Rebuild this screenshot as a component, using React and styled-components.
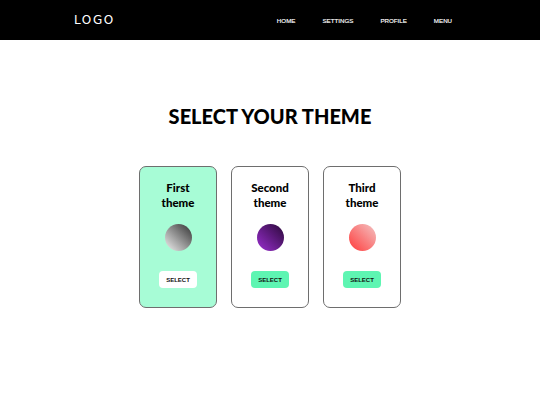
import React from 'react';
import styled, { createGlobalStyle } from 'styled-components';

const Global = createGlobalStyle`
  body {
    margin: 0;
    font-family: "Lato", "Noto Sans", sans-serif;
    background: #fff;
  }
`;

const themes = [
  { name: 'First', swatch: 'linear-gradient(45deg, #f2f2f2 0%, #303030 100%)', active: true },
  { name: 'Second', swatch: 'linear-gradient(45deg, #9a2fd0 0%, #2a0838 100%)' },
  { name: 'Third', swatch: 'linear-gradient(45deg, #ff3a3a 0%, #f3c4c4 100%)' },
];

function App() {
  return (
    <>
      <Global />
      <Header>
        <Logo>LOGO</Logo>
        <Nav>
          <li>HOME</li>
          <li>SETTINGS</li>
          <li>PROFILE</li>
          <li>MENU</li>
        </Nav>
      </Header>
      <Main>
        <Title>SELECT YOUR THEME</Title>
        <Cards>
          {themes.map((t) => (
            <Card key={t.name} active={t.active}>
              <CardTitle>{t.name}<br />theme</CardTitle>
              <Swatch style={{ background: t.swatch }} />
              <SelectButton active={t.active}>SELECT</SelectButton>
            </Card>
          ))}
        </Cards>
      </Main>
    </>
  );
}

export default App;

const Header = styled.header`
  height: 40px;
  background: #000;
  display: flex;
  align-items: center;
  padding: 0 0 0 74px;
`;

const Logo = styled.div`
  color: #fff;
  font-family: "DejaVu Sans", sans-serif;
  font-size: 12px;
  letter-spacing: 1.6px;
`;

const Nav = styled.ul`
  list-style: none;
  margin: 0 0 0 162px;
  padding: 0;
  display: flex;
  gap: 27px;

  li {
    color: #fff;
    font-family: "Liberation Sans", sans-serif;
    font-size: 6.2px;
    font-weight: 400;
    -webkit-text-stroke: 0.15px #fff;
  }
`;

const Main = styled.main`
  display: flex;
  flex-direction: column;
  align-items: center;
  padding-top: 64px;
`;

const Title = styled.h1`
  margin: 0;
  font-family: "Lato", sans-serif;
  font-weight: 900;
  font-size: 20px;
  color: #000;
`;

const Cards = styled.div`
  display: flex;
  gap: 14px;
  margin-top: 38px;
`;

const Card = styled.div`
  width: 78px;
  height: 142px;
  box-sizing: border-box;
  border: 1px solid #6e6e6e;
  border-radius: 7px;
  background: ${(p) => (p.active ? '#a7fcd6' : '#fff')};
  display: flex;
  flex-direction: column;
  align-items: center;
  padding-top: 13px;
`;

const CardTitle = styled.div`
  font-family: "Lato", sans-serif;
  font-weight: 900;
  font-size: 11.5px;
  line-height: 15px;
  text-align: center;
  color: #000;
`;

const Swatch = styled.div`
  width: 27px;
  height: 27px;
  border-radius: 50%;
  margin-top: 14px;
`;

const SelectButton = styled.button`
  margin-top: 20px;
  width: 38px;
  height: 17px;
  border: none;
  border-radius: 4px;
  background: ${(p) => (p.active ? '#fff' : '#5ef5b2')};
  font-family: "Liberation Sans", sans-serif;
  font-weight: 700;
  font-size: 6px;
  color: #111;
  padding: 0;
`;
